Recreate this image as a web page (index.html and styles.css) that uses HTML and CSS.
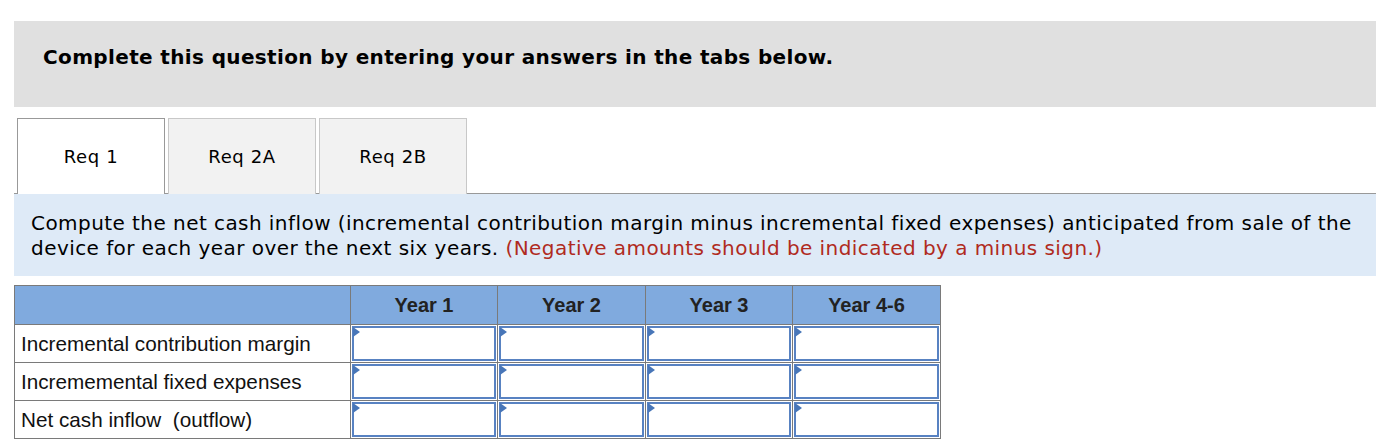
FILE: index.html
```html
<!DOCTYPE html>
<html>
<head>
<meta charset="utf-8">
<link rel="stylesheet" href="styles.css">
</head>
<body>
<div class="page">
  <div class="banner">Complete this question by entering your answers in the tabs below.</div>
  <div class="tabs">
    <div class="tab active">Req 1</div>
    <div class="tab">Req 2A</div>
    <div class="tab">Req 2B</div>
  </div>
  <div class="instructions">Compute the net cash inflow (incremental contribution margin minus incremental fixed expenses) anticipated from sale of the device for each year over the next six years. <span class="note">(Negative amounts should be indicated by a minus sign.)</span></div>
  <table class="grid">
    <colgroup>
      <col class="c-label">
      <col class="c-a">
      <col class="c-b">
      <col class="c-a">
      <col class="c-b">
    </colgroup>
    <thead>
      <tr>
        <th></th>
        <th>Year 1</th>
        <th>Year 2</th>
        <th>Year 3</th>
        <th>Year 4-6</th>
      </tr>
    </thead>
    <tbody>
      <tr>
        <td class="label">Incremental contribution margin</td>
        <td class="cell"><div class="input"></div></td>
        <td class="cell"><div class="input"></div></td>
        <td class="cell"><div class="input"></div></td>
        <td class="cell"><div class="input"></div></td>
      </tr>
      <tr>
        <td class="label">Incrememental fixed expenses</td>
        <td class="cell"><div class="input"></div></td>
        <td class="cell"><div class="input"></div></td>
        <td class="cell"><div class="input"></div></td>
        <td class="cell"><div class="input"></div></td>
      </tr>
      <tr>
        <td class="label">Net cash inflow&nbsp; (outflow)</td>
        <td class="cell"><div class="input"></div></td>
        <td class="cell"><div class="input"></div></td>
        <td class="cell"><div class="input"></div></td>
        <td class="cell"><div class="input"></div></td>
      </tr>
    </tbody>
  </table>
</div>
</body>
</html>
```

FILE: styles.css
```css
* { box-sizing: border-box; }
html, body { margin: 0; padding: 0; background: #fff; }
.page {
  padding: 21px 24px 0 14px;
  font-family: "DejaVu Sans", Verdana, sans-serif;
  color: #000;
}
.banner {
  background: #e0e0e0;
  height: 86px;
  padding: 23px 0 0 29px;
  font-weight: bold;
  font-size: 20px;
  letter-spacing: 0.36px;
  line-height: 26px;
}
.tabs {
  display: flex;
  gap: 3px;
  margin-top: 11px;
  padding-left: 3px;
  border-bottom: 1px solid #999;
  height: 76px;
}
.tab {
  width: 148px;
  height: 76px;
  background: #f2f2f2;
  border: 1px solid #c8c8c8;
  border-bottom: none;
  display: flex;
  align-items: center;
  justify-content: center;
  font-size: 18px;
  letter-spacing: 0.6px;
  padding-bottom: 1px;
}
.tab.active {
  background: #fff;
  border-color: #999;
}
.instructions {
  background: #deeaf7;
  height: 82px;
  padding: 17px 20px 0 17px;
  font-size: 20px;
  letter-spacing: 0.44px;
  line-height: 25px;
}
.note { color: #b02a21; }
.grid {
  margin-top: 9px;
  border-collapse: collapse;
  table-layout: fixed;
  width: 927px;
  font-family: "Liberation Sans", Arial, sans-serif;
  font-size: 20.7px;
  color: #1a1a1a;
}
.c-label { width: 336px; }
.c-a { width: 147px; }
.c-b { width: 148px; }
.grid th {
  background: #80aade;
  border: 1px solid #7a7a7a;
  height: 39px;
  font-size: 20px;
  font-weight: bold;
  color: #222;
  padding: 0;
}
.grid td {
  border: 1px solid #7a7a7a;
  padding: 0;
  height: 38px;
}
.grid td.label {
  padding-left: 6px;
  color: #111;
  white-space: nowrap;
}
.grid td.cell { padding: 1px; }
.input {
  position: relative;
  height: 35px;
  border: 2px solid #5882c2;
  background: #fff;
}
.input::before {
  content: "";
  position: absolute;
  left: -1px;
  top: -1px;
  border-left: 7px solid #4876b8;
  border-top: 5px solid transparent;
  border-bottom: 5px solid transparent;
}
```
